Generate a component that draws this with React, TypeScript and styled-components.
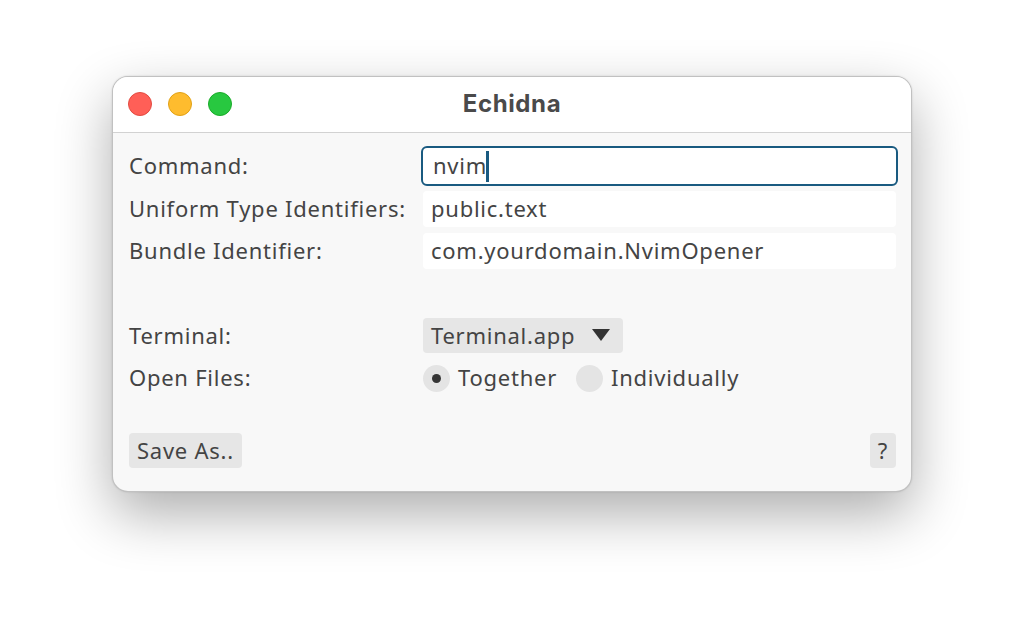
import styled, { createGlobalStyle } from "styled-components";

const GlobalStyle = createGlobalStyle`
    html, body {
        margin: 0;
        padding: 0;
        background: #ffffff;
    }
    body {
        font-family: "Noto Sans", "Open Sans", sans-serif;
    }
`;

const Desktop = styled.div`
    display: flex;
    justify-content: center;
    padding-top: 76px;
    height: 640px;
    box-sizing: border-box;
`;

const Window = styled.div`
    width: 800px;
    height: 416px;
    box-sizing: border-box;
    display: flex;
    flex-direction: column;
    border-radius: 16px;
    overflow: hidden;
    background: #f8f8f8;
    border: 1px solid rgba(0, 0, 0, 0.22);
    box-shadow: 0 22px 55px rgba(0, 0, 0, 0.32), 0 0 2px rgba(0, 0, 0, 0.15);
`;

const TitleBar = styled.div`
    position: relative;
    height: 55px;
    flex-shrink: 0;
    display: flex;
    align-items: center;
    justify-content: center;
    background: #ffffff;
    border-bottom: 1px solid #d2d2d2;
`;

const Lights = styled.div`
    position: absolute;
    left: 15px;
    top: 15px;
    display: flex;
    gap: 16px;
`;

const Light = styled.span<{ color: string; edge: string }>`
    width: 24px;
    height: 24px;
    border-radius: 50%;
    box-sizing: border-box;
    background: ${(p) => p.color};
    border: 1px solid ${(p) => p.edge};
`;

const Title = styled.div`
    font-family: Inter, "Liberation Sans", sans-serif;
    font-weight: 700;
    font-size: 24px;
    color: #4a4a4a;
    letter-spacing: 0.6px;
    margin-top: -2px;
`;

const Body = styled.div`
    flex: 1;
    display: flex;
    flex-direction: column;
    padding: 15px 15px 23px 16px;
    color: #444444;
    font-size: 22px;
    letter-spacing: 0.75px;
`;

const Row = styled.div<{ gap?: number }>`
    display: grid;
    grid-template-columns: 294px 1fr;
    align-items: center;
    margin-top: ${(p) => p.gap ?? 0}px;
`;

const Label = styled.div`
    line-height: 36px;
    white-space: nowrap;
    margin-top: -2px;
`;

const Field = styled.div<{ focused?: boolean }>`
    position: relative;
    height: ${(p) => (p.focused ? 40 : 36)}px;
    margin: ${(p) => (p.focused ? "-2px -2px" : "0")};
    box-sizing: border-box;
    display: flex;
    align-items: center;
    padding-left: ${(p) => (p.focused ? 10 : 8)}px;
    padding-bottom: 2px;
    background: #ffffff;
    border-radius: ${(p) => (p.focused ? 6 : 4)}px;
    border: ${(p) => (p.focused ? "2px solid #195a80" : "none")};
    color: #444444;
`;

const Caret = styled.span`
    display: inline-block;
    width: 3px;
    height: 31px;
    background: #195a80;
    margin-left: -1px;
    margin-top: 2px;
`;

const Select = styled.div`
    width: 200px;
    height: 35px;
    box-sizing: border-box;
    display: flex;
    align-items: center;
    justify-content: space-between;
    padding: 0 12px 2px 8px;
    background: #e6e6e6;
    border-radius: 4px;
`;

const Options = styled.div`
    display: flex;
    align-items: center;
    gap: 19px;
`;

const Option = styled.label`
    display: flex;
    align-items: center;
    gap: 8px;
    padding-bottom: 2px;
`;

const Radio = styled.span<{ checked?: boolean }>`
    width: 27px;
    height: 27px;
    border-radius: 50%;
    background: #e4e4e4;
    display: flex;
    align-items: center;
    justify-content: center;
    margin-top: 2px;

    &::after {
        content: "";
        width: 9px;
        height: 9px;
        border-radius: 50%;
        background: ${(p) => (p.checked ? "#353535" : "transparent")};
    }
`;

const Footer = styled.div`
    margin-top: auto;
    display: flex;
    justify-content: space-between;
    align-items: center;
`;

const Button = styled.div`
    height: 35px;
    box-sizing: border-box;
    display: flex;
    align-items: center;
    padding: 0 8px 2px;
    background: #e6e6e6;
    border-radius: 4px;
`;

export default function App() {
    return (
        <>
            <GlobalStyle />
            <Desktop>
                <Window>
                    <TitleBar>
                        <Lights>
                            <Light color="#ff5f57" edge="#e24b41" />
                            <Light color="#febc2e" edge="#e1a116" />
                            <Light color="#28c840" edge="#1aab29" />
                        </Lights>
                        <Title>Echidna</Title>
                    </TitleBar>
                    <Body>
                        <Row>
                            <Label>Command:</Label>
                            <Field focused>
                                nvim
                                <Caret />
                            </Field>
                        </Row>
                        <Row gap={7}>
                            <Label>Uniform Type Identifiers:</Label>
                            <Field>public.text</Field>
                        </Row>
                        <Row gap={6}>
                            <Label>Bundle Identifier:</Label>
                            <Field>com.yourdomain.NvimOpener</Field>
                        </Row>
                        <Row gap={49}>
                            <Label>Terminal:</Label>
                            <Select>
                                Terminal.app
                                <svg width="20" height="14" viewBox="0 0 20 14">
                                    <path d="M1 1h18L10 13z" fill="#333" />
                                </svg>
                            </Select>
                        </Row>
                        <Row gap={8}>
                            <Label>Open Files:</Label>
                            <Options>
                                <Option>
                                    <Radio checked />
                                    <span>Together</span>
                                </Option>
                                <Option>
                                    <Radio />
                                    <span>Individually</span>
                                </Option>
                            </Options>
                        </Row>
                        <Footer>
                            <Button>Save As..</Button>
                            <Button>?</Button>
                        </Footer>
                    </Body>
                </Window>
            </Desktop>
        </>
    );
}
